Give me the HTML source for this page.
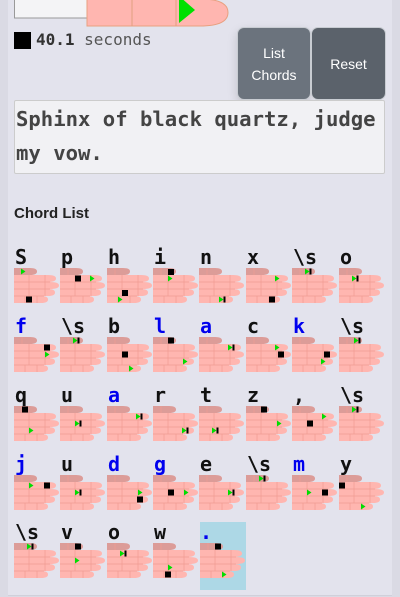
<!DOCTYPE html>
<html><head><meta charset="utf-8"><style>
*{margin:0;padding:0;box-sizing:border-box}
html,body{width:400px;height:597px;overflow:hidden;background:#dadae4;font-family:"Liberation Sans",sans-serif}
#c{position:absolute;left:8px;top:0;width:384px;height:596px;background:#e3e3ed;border-bottom:1px solid #d0d0da}
.abs{position:absolute}
.btn{position:absolute;color:#fff;font-size:14px;text-align:center;border-radius:7px;display:flex;align-items:center;justify-content:center;line-height:22px;border:1px solid #c8ccd2}
.lbl{position:absolute;font-family:"DejaVu Sans Mono","Liberation Mono",monospace;font-weight:bold;font-size:20px;line-height:20px;color:#111}
.bl{color:#0000ee}
</style></head><body>
<div id="c"></div>
<svg class="abs" style="left:0;top:0" width="400" height="40">
<rect x="14.5" y="-1" width="73" height="19" fill="#f4f4f6" stroke="#999"/>
<path d="M87 -1H200Q228 -1 228 12.5Q228 26 200 26H87Z" fill="#ffb6b0" stroke="#e8a080"/>
<line x1="132" y1="-1" x2="132" y2="26" stroke="#e0a080"/>
<line x1="176" y1="-1" x2="176" y2="26" stroke="#e0a080"/>
<polygon points="179,-4 195,10 179,23" fill="#00e000"/>
</svg>
<div class="abs" style="left:14px;top:32px;width:17px;height:17px;background:#000"></div>
<div class="abs" style="left:36px;top:30px;font-family:'DejaVu Sans Mono','Liberation Mono',monospace;font-size:16px;color:#555"><b style="color:#333">40.1</b> seconds</div>
<div class="btn" style="left:237px;top:27px;width:74px;height:73px;background:#6b737d;box-shadow:0 4px 10px rgba(0,0,0,.15)">List<br>Chords</div>
<div class="btn" style="left:311px;top:27px;width:75px;height:73px;background:#5b626b">Reset</div>
<div class="abs" style="left:14px;top:100px;width:371px;height:74px;background:#f1f1f4;border:1px solid #ccc;border-radius:2px;font-family:'DejaVu Sans Mono','Liberation Mono',monospace;font-weight:bold;font-size:20.6px;line-height:34px;color:#444;padding:1px 0 0 1px">Sphinx of black quartz, judge my vow.</div>
<div class="abs" style="left:14px;top:205px;font-weight:bold;font-size:15px;color:#222">Chord List</div>
<div class="abs" style="left:200px;top:522px;width:46px;height:68px;background:#add8e6"></div>

<div class="lbl" style="left:15px;top:247px">S</div><div class="lbl" style="left:61px;top:247px">p</div><div class="lbl" style="left:108px;top:247px">h</div><div class="lbl" style="left:154px;top:247px">i</div><div class="lbl" style="left:200px;top:247px">n</div><div class="lbl" style="left:247px;top:247px">x</div><div class="lbl" style="left:293px;top:247px">\s</div><div class="lbl" style="left:340px;top:247px">o</div>
<div class="lbl bl" style="left:15px;top:316px">f</div><div class="lbl" style="left:61px;top:316px">\s</div><div class="lbl" style="left:108px;top:316px">b</div><div class="lbl bl" style="left:154px;top:316px">l</div><div class="lbl bl" style="left:200px;top:316px">a</div><div class="lbl" style="left:247px;top:316px">c</div><div class="lbl bl" style="left:293px;top:316px">k</div><div class="lbl" style="left:340px;top:316px">\s</div>
<div class="lbl" style="left:15px;top:385px">q</div><div class="lbl" style="left:61px;top:385px">u</div><div class="lbl bl" style="left:108px;top:385px">a</div><div class="lbl" style="left:154px;top:385px">r</div><div class="lbl" style="left:200px;top:385px">t</div><div class="lbl" style="left:247px;top:385px">z</div><div class="lbl" style="left:293px;top:385px">,</div><div class="lbl" style="left:340px;top:385px">\s</div>
<div class="lbl bl" style="left:15px;top:454px">j</div><div class="lbl" style="left:61px;top:454px">u</div><div class="lbl bl" style="left:108px;top:454px">d</div><div class="lbl bl" style="left:154px;top:454px">g</div><div class="lbl" style="left:200px;top:454px">e</div><div class="lbl" style="left:247px;top:454px">\s</div><div class="lbl bl" style="left:293px;top:454px">m</div><div class="lbl" style="left:340px;top:454px">y</div>
<div class="lbl" style="left:15px;top:522px">\s</div><div class="lbl" style="left:61px;top:522px">v</div><div class="lbl" style="left:108px;top:522px">o</div><div class="lbl" style="left:154px;top:522px">w</div><div class="lbl bl" style="left:200px;top:522px">.</div>

<svg class="abs" style="left:0;top:0" width="400" height="597">
<defs>
<g id="h">
<path d="M0 0H16Q23 0 23 3.5Q23 7 16 7H0Z" fill="#dc9c98"/>
<path d="M0 7H34Q42 7 42 10.5Q42 14 34 14H0Z" fill="#ffb6b0"/>
<path d="M0 14H36Q45 14 45 17.5Q45 21 36 21H0Z" fill="#ffb6b0"/>
<path d="M0 21H34Q41 21 41 24.5Q41 28 34 28H0Z" fill="#ffb6b0"/>
<path d="M0 28H27Q34 28 34 31.5Q34 35 27 35H0Z" fill="#ffb6b0"/>
<g stroke="#f09c92" stroke-width="0.7" fill="none">
<path d="M0 14H36M0 21H36M0 28H30M15 7V28M31 7V28M11 28V35M23 28V35M8 0V7"/>
</g>
</g>
<rect id="b" x="-3" y="-3" width="6" height="6" fill="#000"/>
<polygon id="t" points="-2,-3 2.5,0 -2,3" fill="#00dd00"/>
<g id="tb"><polygon points="-4,-3 0.5,0 -4,3" fill="#00dd00"/><rect x="0.5" y="-3" width="2" height="6" fill="#000"/></g>
</defs>
<g transform="translate(14,268)"><use href="#h"/><use href="#t" x="9" y="3.5"/><use href="#b" x="15" y="31.5"/></g>
<g transform="translate(60,268)"><use href="#h"/><use href="#b" x="18" y="10.5"/><use href="#t" x="32" y="10.5"/></g>
<g transform="translate(107,268)"><use href="#h"/><use href="#b" x="18" y="25"/><use href="#t" x="13" y="31.5"/></g>
<g transform="translate(153,268)"><use href="#h"/><use href="#b" x="18" y="4"/><use href="#t" x="17" y="10.5"/></g>
<g transform="translate(199,268)"><use href="#h"/><use href="#tb" x="24" y="31.5"/></g>
<g transform="translate(246,268)"><use href="#h"/><use href="#t" x="31" y="10.5"/><use href="#b" x="26" y="31.5"/></g>
<g transform="translate(292,268)"><use href="#h"/><use href="#tb" x="17" y="3.5"/></g>
<g transform="translate(339,268)"><use href="#h"/><use href="#tb" x="17" y="10.5"/></g>

<g transform="translate(14,337)"><use href="#h"/><use href="#b" x="33" y="10.5"/><use href="#t" x="33" y="17.5"/></g>
<g transform="translate(60,337)"><use href="#h"/><use href="#tb" x="17" y="3.5"/></g>
<g transform="translate(107,337)"><use href="#h"/><use href="#b" x="18" y="17.5"/><use href="#t" x="24" y="31.5"/></g>
<g transform="translate(153,337)"><use href="#h"/><use href="#b" x="18" y="3.5"/><use href="#t" x="32" y="24.5"/></g>
<g transform="translate(199,337)"><use href="#h"/><use href="#tb" x="33" y="10.5"/></g>
<g transform="translate(246,337)"><use href="#h"/><use href="#t" x="31" y="10.5"/><use href="#b" x="35" y="17.5"/></g>
<g transform="translate(292,337)"><use href="#h"/><use href="#b" x="35" y="17.5"/><use href="#t" x="31" y="24.5"/></g>
<g transform="translate(339,337)"><use href="#h"/><use href="#tb" x="19" y="3.5"/></g>

<g transform="translate(14,406)"><use href="#h"/><use href="#b" x="11" y="3.5"/><use href="#t" x="17" y="24.5"/></g>
<g transform="translate(60,406)"><use href="#h"/><use href="#tb" x="19" y="17.5"/></g>
<g transform="translate(107,406)"><use href="#h"/><use href="#tb" x="33" y="10.5"/></g>
<g transform="translate(153,406)"><use href="#h"/><use href="#tb" x="33" y="24.5"/></g>
<g transform="translate(199,406)"><use href="#h"/><use href="#tb" x="17" y="24.5"/></g>
<g transform="translate(246,406)"><use href="#h"/><use href="#b" x="18" y="3.5"/><use href="#t" x="33" y="17.5"/></g>
<g transform="translate(292,406)"><use href="#h"/><use href="#t" x="32" y="10.5"/><use href="#b" x="18" y="17.5"/></g>
<g transform="translate(339,406)"><use href="#h"/><use href="#tb" x="17" y="3.5"/></g>

<g transform="translate(14,475)"><use href="#h"/><use href="#t" x="17" y="10.5"/><use href="#b" x="33" y="10.5"/></g>
<g transform="translate(60,475)"><use href="#h"/><use href="#tb" x="19" y="17.5"/></g>
<g transform="translate(107,475)"><use href="#h"/><use href="#t" x="33" y="17.5"/><use href="#b" x="33" y="24.5"/></g>
<g transform="translate(153,475)"><use href="#h"/><use href="#b" x="18" y="17.5"/><use href="#t" x="33" y="17.5"/></g>
<g transform="translate(199,475)"><use href="#h"/><use href="#tb" x="33" y="17.5"/></g>
<g transform="translate(246,475)"><use href="#h"/><use href="#tb" x="17" y="3.5"/></g>
<g transform="translate(292,475)"><use href="#h"/><use href="#t" x="17" y="17.5"/><use href="#b" x="33" y="17.5"/></g>
<g transform="translate(339,475)"><use href="#h"/><use href="#b" x="3" y="10.5"/><use href="#t" x="24" y="31.5"/></g>

<g transform="translate(14,543)"><use href="#h"/><use href="#tb" x="17" y="3.5"/></g>
<g transform="translate(60,543)"><use href="#h"/><use href="#b" x="18" y="3.5"/><use href="#t" x="17" y="17.5"/></g>
<g transform="translate(107,543)"><use href="#h"/><use href="#tb" x="17" y="10.5"/></g>
<g transform="translate(153,543)"><use href="#h"/><use href="#t" x="17" y="24.5"/><use href="#b" x="15" y="31.5"/></g>
<g transform="translate(200,543)"><use href="#h"/><use href="#b" x="18" y="3.5"/><use href="#t" x="24" y="31.5"/></g>
</svg>
</body></html>
